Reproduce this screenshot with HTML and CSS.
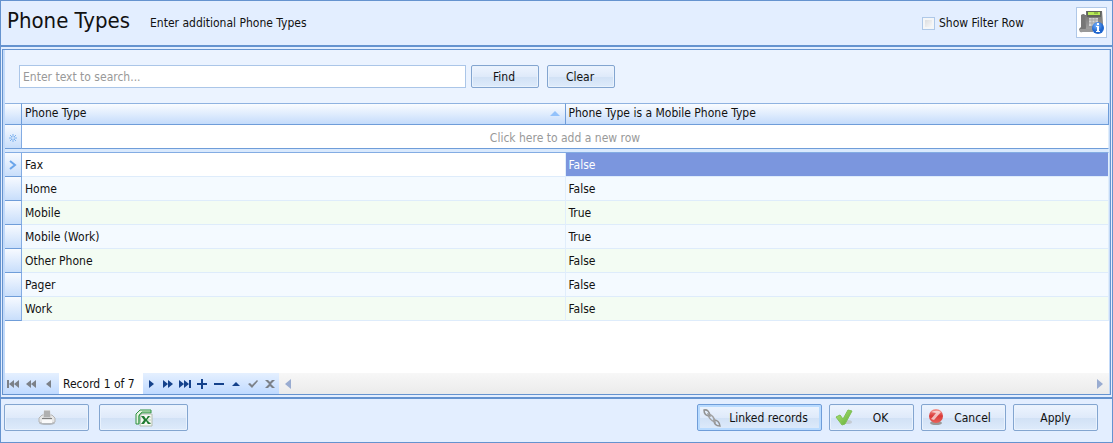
FILE: index.html
```html
<!DOCTYPE html>
<html lang="en">
<head>
    <meta charset="UTF-8">
    <meta name="viewport" content="width=device-width, initial-scale=1.0">
    <title>Phone Types</title>
    <link rel="stylesheet" href="styles.css">
</head>
<body>

<header class="title-bar">
    <h1>Phone Types</h1>
    <p>Enter additional Phone Types</p>
    <label class="filter-toggle"><input type="checkbox" id="show-filter">Show Filter Row</label>
    <button class="info-btn" aria-label="Phone information">
        <svg width="26" height="26" viewBox="0 0 26 26">
            <defs>
                <linearGradient id="phone" x1="0" y1="0" x2="0" y2="1"><stop offset="0" stop-color="#6a6a6a"/><stop offset="1" stop-color="#a5a5a5"/></linearGradient>
                <radialGradient id="info" cx=".4" cy=".3"><stop offset="0" stop-color="#79b5ff"/><stop offset="1" stop-color="#1f66cf"/></radialGradient>
            </defs>
            <path d="M7 2h16l1 12v8H5V6h2z" fill="url(#phone)"/>
            <path d="M2 6q3-2 4 0l1 12q0 6-6 5l-1-3 2-2z" fill="#777"/>
            <path d="M8 2h14v6H8z" fill="#60645b"/>
            <path d="M9 3h12v3H9z" fill="#b7ea57"/>
            <path d="M15 4h4" stroke="#64922a"/>
            <path d="M10 9h9v8h-9z" fill="#d2d2d2"/>
            <path d="M10 11h9M10 14h9M13 9v8M16 9v8" stroke="#a5a5a5"/>
            <path d="M1 20h13v3H1z" fill="#999"/>
            <circle cx="19" cy="19" r="6" fill="url(#info)"/>
            <path d="M17 17h3v5h1v1h-4v-1h1v-4h-1zM18 14h2v2h-2z" fill="#fff"/>
        </svg>
    </button>
</header>

<main class="panel">
    <form class="search">
        <input type="text" id="search" aria-label="Search" placeholder="Enter text to search...">
        <button type="button" class="btn">Find</button>
        <button type="button" class="btn">Clear</button>
    </form>

    <table class="grid">
        <colgroup><col class="col-mark"><col><col></colgroup>
        <thead>
            <tr>
                <th class="mark"></th>
                <th><span class="sorted">Phone Type<svg width="10" height="5" viewBox="0 0 10 5"><path d="M5 0l5 5H0z" fill="#93c2fb"/></svg></span></th>
                <th>Phone Type is a Mobile Phone Type</th>
            </tr>
            <tr class="new-row">
                <td class="mark"><svg width="8" height="8" viewBox="0 0 8 8"><path d="M4 0v8M0 4h8M1 1l6 6M7 1L1 7" stroke="#7fb2ee" fill="none"/><circle cx="4" cy="4" r="1" fill="#e3efff"/></svg></td>
                <td colspan="2">Click here to add a new row</td>
            </tr>
            <tr class="divider"><td colspan="3"></td></tr>
        </thead>
        <tbody>
            <tr class="current">
                <td class="mark"><svg width="8" height="10" viewBox="0 0 8 10"><path d="M1 1l5 4-5 4" stroke="#6aa5ea" stroke-width="2" fill="none"/></svg></td>
                <td>Fax</td><td class="selected">False</td>
            </tr>
            <tr><td class="mark"></td><td>Home</td><td>False</td></tr>
            <tr><td class="mark"></td><td>Mobile</td><td>True</td></tr>
            <tr><td class="mark"></td><td>Mobile (Work)</td><td>True</td></tr>
            <tr><td class="mark"></td><td>Other Phone</td><td>False</td></tr>
            <tr><td class="mark"></td><td>Pager</td><td>False</td></tr>
            <tr><td class="mark"></td><td>Work</td><td>False</td></tr>
        </tbody>
    </table>

    <div class="navigator">
        <div class="nav-group off">
            <button aria-label="First"><svg viewBox="0 0 12 10"><path d="M0 1h2v8H0zM7 1v8L2 5zM12 1v8L7 5z"/></svg></button>
            <button aria-label="Previous page"><svg viewBox="0 0 12 10"><path d="M6 1v8L1 5zM11 1v8L6 5z"/></svg></button>
            <button aria-label="Previous"><svg viewBox="0 0 12 10"><path d="M8 1v8L3 5z"/></svg></button>
        </div>
        <span class="record">Record 1 of 7</span>
        <div class="nav-group">
            <button aria-label="Next"><svg viewBox="0 0 12 10"><path d="M4 1l5 4-5 4z"/></svg></button>
            <button aria-label="Next page"><svg viewBox="0 0 12 10"><path d="M1 1l5 4-5 4zM6 1l5 4-5 4z"/></svg></button>
            <button aria-label="Last"><svg viewBox="0 0 12 10"><path d="M0 1l5 4-5 4zM5 1l5 4-5 4zM10 1h2v8h-2z"/></svg></button>
            <button aria-label="Add"><svg viewBox="0 0 12 10"><path d="M5 0h2v4h4v2H7v4H5V6H1V4h4z"/></svg></button>
            <button aria-label="Delete"><svg viewBox="0 0 12 10"><path d="M1 4h10v2H1z"/></svg></button>
            <button aria-label="Edit"><svg viewBox="0 0 12 10"><path d="M6 3l4 4H2z"/></svg></button>
            <button class="dim" aria-label="Post"><svg viewBox="0 0 12 10"><path d="M1 5l2-1 2 2 5-5 1 1-6 7z"/></svg></button>
            <button class="dim" aria-label="Cancel edit"><svg viewBox="0 0 12 10"><path d="M1 1h3l2 2 2-2h3L7 5l4 4H8L6 7 4 9H1l4-4z"/></svg></button>
        </div>
        <div class="scrollbar">
            <svg width="6" height="10" viewBox="0 0 6 10"><path d="M6 0v10L0 5z"/></svg>
            <svg width="6" height="10" viewBox="0 0 6 10"><path d="M0 0v10l6-5z"/></svg>
        </div>
    </div>
</main>

<footer class="actions">
    <button class="btn print" aria-label="Print">
        <svg width="18" height="16" viewBox="0 0 18 16">
            <ellipse cx="9" cy="13" rx="8" ry="2" fill="#b3bac2"/>
            <path d="M1 8l3-3h10l3 3v4l-2 1H3l-2-1z" fill="#e6e6e6" stroke="#b5b5b5"/>
            <path d="M6 0h6l1 8H5z" fill="#d2d2d2"/>
            <path d="M6 1h6v6H6z" fill="#b0b0b0"/>
            <path d="M4 8h10v1H4z" fill="#808080"/>
            <path d="M4 10h10v3H4z" fill="#fafafa"/>
        </svg>
    </button>
    <button class="btn excel" aria-label="Export to Excel">
        <svg width="18" height="18" viewBox="0 0 18 18">
            <path d="M5 1h11v3H7L4 7v8H1V5z" fill="#e6f4e2" stroke="#2e9140"/>
            <path d="M4 15V6l3-3h9" fill="none" stroke="#45a352"/>
            <path d="M6 5h11v12H5z" fill="#f7faf5" stroke="#b3bdb0"/>
            <path d="M12 8h4M13 11h3M12 14h4" stroke="#b8d1b3"/>
            <path d="M6 7h3l2 3 2-3h2l-3 4 4 4h-3l-2-3-2 3H6l3-4z" fill="#207b31"/>
        </svg>
    </button>
    <span class="spacer"></span>
    <button class="btn linked">
        <svg width="18" height="18" viewBox="0 0 18 18" fill="none">
            <path d="M1 1q5-1 6 6-6 0-6-6zM11 11q5 0 6 6-6 0-6-6z" stroke="#929292" stroke-width="1.500"/>
            <path d="M5 5q6 1 7 8-6-2-7-8z" stroke="#a0a0a0" stroke-width="1.500"/>
        </svg>
        <span>Linked records</span>
    </button>
    <button class="btn">
        <svg width="18" height="18" viewBox="0 0 18 18">
            <defs><linearGradient id="ok" x1="0" y1="0" x2="1" y2="1"><stop offset="0" stop-color="#b5e777"/><stop offset="1" stop-color="#5bab35"/></linearGradient></defs>
            <ellipse cx="12" cy="13" rx="5" ry="2" fill="#c4cbd3"/>
            <path d="M1 8l4-2 3 4 5-9 4 1-7 13-3 1z" fill="url(#ok)" stroke="#7fc056"/>
        </svg>
        <span>OK</span>
    </button>
    <button class="btn">
        <svg width="18" height="18" viewBox="0 0 18 18">
            <defs><linearGradient id="no" x1="0" y1="0" x2="0" y2="1"><stop offset="0" stop-color="#f79a94"/><stop offset=".5" stop-color="#d93a38"/><stop offset="1" stop-color="#e9615a"/></linearGradient></defs>
            <ellipse cx="9" cy="14" rx="6" ry="2" fill="#999"/>
            <circle cx="9" cy="7" r="7" fill="url(#no)"/>
            <path d="M4 3q5-2 8-1l2 1-7 8-3-1 5-6z" fill="#fff" fill-opacity=".65"/>
        </svg>
        <span>Cancel</span>
    </button>
    <button class="btn">Apply</button>
</footer>

</body>
</html>
```
FILE: styles.css
```css
* {
    box-sizing: border-box;
}
body {
    margin: 0;
    min-height: 100vh;
    display: flex;
    flex-direction: column;
    border: 1px solid #6593cf;
    background: #e3eeff;
    color: #111;
    font: 12px/16px "DejaVu Sans Condensed", Tahoma, sans-serif;
}
button,
input {
    font: inherit;
    color: inherit;
}
svg {
    display: block;
    flex: none;
}
.title-bar {
    height: 46px;
    display: flex;
    align-items: center;
    padding: 0 5px 0 6px;
    border-bottom: 2px solid #6593cf;
}
.title-bar h1 {
    margin: 0 20px 4px 0;
    font-size: 22px;
    line-height: 26px;
    font-weight: normal;
}
.title-bar p {
    margin: 0;
    flex: 1;
}
.filter-toggle {
    display: flex;
    align-items: center;
    gap: 4px;
    margin-right: 52px;
}
.filter-toggle input {
    appearance: none;
    width: 13px;
    height: 13px;
    margin: 0;
    border: 1px solid #aec8e8;
    background: linear-gradient(135deg, #d5d7da, #fff);
    box-shadow: inset 0 0 0 2px #f4f6f8;
}
.filter-toggle input:checked {
    background: #4b7fc4;
}
.info-btn {
    width: 31px;
    height: 31px;
    margin-bottom: 2px;
    padding: 0;
    display: flex;
    align-items: center;
    justify-content: center;
    border: 1px solid #b0c8e8;
    background: white;
}
.panel {
    flex: 1;
    display: flex;
    flex-direction: column;
    margin: 2px 1px;
    padding: 0 1px 0 2px;
    border: 1px solid #6593cf;
    background: linear-gradient(to right, #c3daf9 2px, white 2px, white calc(100% - 1px), #c3daf9 calc(100% - 1px));
}
.search {
    height: 53px;
    display: flex;
    align-items: center;
    padding: 0 14px;
    background: #ebf3ff;
}
.search input {
    flex: 0 1 447px;
    min-width: 0;
    height: 23px;
    margin-right: 5px;
    padding: 0 3px;
    border: 1px solid #abc6e8;
    background: white;
}
.search input::placeholder {
    color: #999;
    opacity: 1;
}
.btn {
    display: flex;
    align-items: center;
    justify-content: center;
    padding: 0 5px;
    border: 1px solid #83a5d0;
    border-radius: 2px;
    background: linear-gradient(#edf4fe 0, #dfeafa 50%, #d1e1f5 51%, #deebfb 100%);
    box-shadow: inset 0 0 0 1px #e9f2fd;
}
.search .btn {
    width: 68px;
    height: 23px;
    margin-right: 8px;
    padding-right: 7px;
}
.grid {
    width: 100%;
    table-layout: fixed;
    border-collapse: separate;
    border-spacing: 0;
    background: white;
}
.col-mark {
    width: 17px;
}
.grid th,
.grid td {
    height: 24px;
    padding: 0 3px;
    text-align: left;
    font-weight: normal;
    border-right: 1px solid #e1eefb;
    border-bottom: 1px solid #deecfb;
}
.grid th {
    height: 22px;
    padding: 0 3px 2px;
    border-top: 1px solid #8fb2e0;
    border-right-color: #6f9dd9;
    border-bottom-color: #6f9dd9;
    background: linear-gradient(#fafcff, #c5dcfb);
}
.sorted {
    display: flex;
    align-items: center;
    justify-content: space-between;
    padding-right: 2px;
}
.grid td.mark {
    padding: 0 4px;
    border-right-color: #83ace3;
    border-bottom-color: #6f9dd9;
    background: linear-gradient(#f7faff, #c8defb);
}
.grid .new-row td {
    padding-top: 2px;
    color: #999;
    text-align: center;
    border-bottom-color: #6f9dd9;
}
.grid .divider td {
    height: 4px;
    padding: 0;
    background: #d9e9fd;
    border-bottom-color: #83ace3;
}
.grid tbody tr {
    background: #f4faff;
}
.grid tbody tr:nth-child(odd) {
    background: #f3fcf3;
}
.grid tbody tr.current {
    background: white;
}
.grid .selected {
    background: #7b96de;
    color: white;
}
.navigator {
    height: 21px;
    margin-top: auto;
    display: flex;
    background: #f0f0f0;
}
.nav-group {
    display: flex;
    background: linear-gradient(#e5f0ff, #c0daff);
}
.nav-group button {
    width: 17px;
    padding: 0 2px;
    border: 0;
    background: none;
    fill: #15428b;
}
.nav-group svg {
    width: 12px;
    height: 10px;
}
.nav-group.off button {
    width: 18px;
    padding: 0 2px;
}
.nav-group.off button,
.nav-group .dim {
    fill: #7c8188;
}
.record {
    padding: 3px 8px 2px 4px;
    background: white;
}
.scrollbar {
    flex: 1;
    display: flex;
    align-items: center;
    justify-content: space-between;
    padding: 0 6px;
    fill: #99acd1;
    background: linear-gradient(#f7f7f7, #ebebeb);
}
.actions {
    height: 45px;
    display: flex;
    align-items: flex-start;
    gap: 7px;
    padding: 5px 14px 0 3px;
    border-top: 2px solid #6593cf;
}
.actions .btn {
    width: 85px;
    height: 27px;
}
.actions .excel {
    width: 89px;
    margin-left: 3px;
}
.actions .linked {
    width: 125px;
    border-color: #6f9dd9;
    box-shadow: inset 0 0 0 2px #b9dbff;
}
.actions .btn span {
    flex: 1;
}
.spacer {
    flex: 1;
}
```
